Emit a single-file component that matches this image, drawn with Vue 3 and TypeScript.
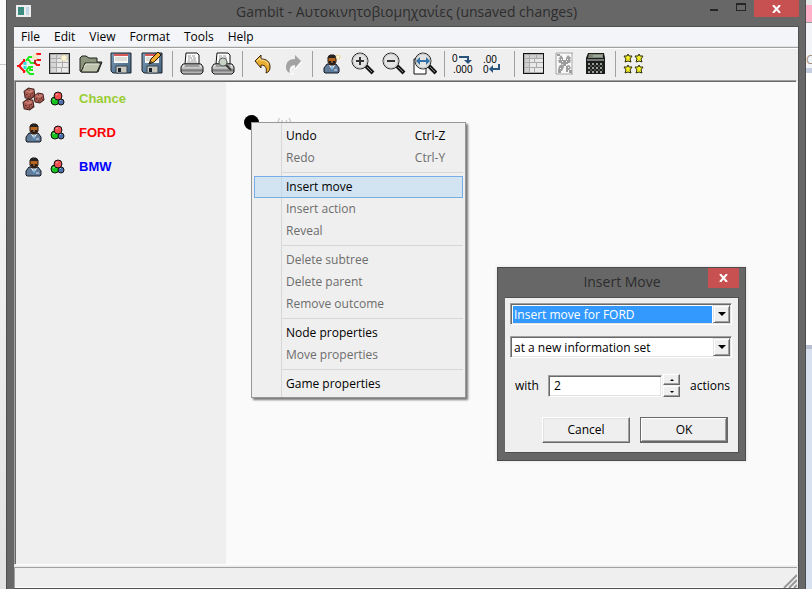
<script setup lang="ts">
import { ref } from 'vue'

interface Tool { id: string; label: string; disabled?: boolean }
interface MenuItem { label: string; shortcut?: string; disabled?: boolean; active?: boolean }
interface Player { name: string; icon: string; tone: string }

const menus: string[] = ['File', 'Edit', 'View', 'Format', 'Tools', 'Help']

const toolGroups: Tool[][] = [
  [
    { id: 'tree', label: 'New extensive game' },
    { id: 'table', label: 'New strategic game' },
    { id: 'open', label: 'Open' },
    { id: 'save', label: 'Save' },
    { id: 'saveas', label: 'Save as' },
  ],
  [
    { id: 'print', label: 'Print' },
    { id: 'preview', label: 'Print preview' },
  ],
  [
    { id: 'undo', label: 'Undo' },
    { id: 'redo', label: 'Redo', disabled: true },
  ],
  [
    { id: 'newplayer', label: 'Add player' },
    { id: 'zoomin', label: 'Zoom in' },
    { id: 'zoomout', label: 'Zoom out' },
    { id: 'zoomfit', label: 'Fit to window' },
  ],
  [
    { id: 'moredec', label: 'More decimals' },
    { id: 'lessdec', label: 'Fewer decimals' },
  ],
  [
    { id: 'strategic', label: 'Strategic view' },
    { id: 'profiles', label: 'Profiles', disabled: true },
    { id: 'calc', label: 'Compute equilibria' },
  ],
  [{ id: 'stars', label: 'Equilibria' }],
]

const players: Player[] = [
  { name: 'Chance', icon: 'dice', tone: 'chance' },
  { name: 'FORD', icon: 'person', tone: 'first' },
  { name: 'BMW', icon: 'person', tone: 'second' },
]

const contextGroups: MenuItem[][] = [
  [
    { label: 'Undo', shortcut: 'Ctrl-Z' },
    { label: 'Redo', shortcut: 'Ctrl-Y', disabled: true },
  ],
  [
    { label: 'Insert move', active: true },
    { label: 'Insert action', disabled: true },
    { label: 'Reveal', disabled: true },
  ],
  [
    { label: 'Delete subtree', disabled: true },
    { label: 'Delete parent', disabled: true },
    { label: 'Remove outcome', disabled: true },
  ],
  [
    { label: 'Node properties' },
    { label: 'Move properties', disabled: true },
  ],
  [{ label: 'Game properties' }],
]

const mover = ref('Insert move for FORD')
const infoset = ref('at a new information set')
const actions = ref('2')

function step(by: number): void {
  actions.value = String(Math.max(1, Number(actions.value) + by))
}
</script>

<template>
  <div class="desktop">
    <svg class="sprites" aria-hidden="true">
      <defs>
        <linearGradient id="metal" x1="0" y1="0" x2="0" y2="1">
          <stop offset="0" stop-color="#fafafa" /><stop offset="0.5" stop-color="#b5b5b5" />
          <stop offset="0.6" stop-color="#6e6e6e" /><stop offset="1" stop-color="#e0e0e0" />
        </linearGradient>
        <linearGradient id="disk" x1="0" y1="0" x2="1" y2="1">
          <stop offset="0" stop-color="#7d9db8" /><stop offset="1" stop-color="#41607c" />
        </linearGradient>
        <symbol id="i-tree" viewBox="0 0 24 24">
          <g fill="none" stroke-width="2">
            <path d="M8 8l-6 6 6 6" stroke="#f11" />
            <path d="M0 14h4M7 7v3M7 18v3" stroke="#f11" stroke-width="2" />
            <path d="M8 10v8" stroke="#2de0e0" stroke-width="3" stroke-dasharray="3 1" />
            <path d="M9 9l3-4h4M11 7l3 4h3M9 19l3-4h4M10 19l3 3h4M13 15v3h3" stroke="#1fe81f" />
            <path d="M18 6l2-4h4M18 7l3 1h3M17 10l3 3h3" stroke="#f11" />
            <path d="M18 5v7" stroke="#a22" />
          </g>
          <circle cx="18" cy="5" r="3" fill="#f7e8c8" />
        </symbol>
        <symbol id="i-table" viewBox="0 0 24 24">
          <path d="M1 1h21v21H1z" fill="#222" /><path d="M2 2h19v19H2z" fill="#aaa" />
          <path d="M3 3h5v3H3zM9 3h5v3H9zM15 3h5v3h-5zM3 7h5v3H3zM3 11h5v4H3zM3 16h5v4H3z" fill="#d6d6d6" />
          <path d="M9 7h5v3H9zM15 7h5v3h-5zM9 11h5v4H9zM15 11h5v4h-5zM9 16h4v4H9zM14 16h6v4h-6z" fill="#eaeaea" />
          <circle cx="16" cy="6" r="3" fill="#fff5d5" stroke="#dccb9f" stroke-dasharray="2 1" />
        </symbol>
        <symbol id="i-strategic" viewBox="0 0 24 24">
          <path d="M1 1h21v21H1z" fill="#111" /><path d="M2 2h19v19H2z" fill="#aaa" />
          <path d="M3 3h4v3H3zM8 3h6v3H8zM15 3h6v3h-6zM3 7h4v3H3zM3 11h4v4H3zM3 16h4v4H3z" fill="#cfcfcf" />
          <path d="M8 7h4v3H8zM13 7h8v3h-8zM8 11h6v4H8zM15 11h6v4h-6zM8 16h4v4H8zM13 16h8v4h-8z" fill="#e8e8e8" />
        </symbol>
        <symbol id="i-open" viewBox="0 0 24 24">
          <path d="M1 19V6l2-2h4l3 2h8v4h5l-4 10H3z" fill="#8c947c" stroke="#1f221b" />
          <path d="M2 20l4-9h16l-4 9z" fill="#bdc3ad" stroke="#1f221b" />
          <path d="M5 15l2-3h13" fill="none" stroke="#e3e7d9" />
        </symbol>
        <symbol id="i-save" viewBox="0 0 24 24">
          <path d="M1 1h20v20H3l-2-2z" fill="url(#disk)" stroke="#1d252c" />
          <path d="M4 2h14v9H4z" fill="#f7f7f4" /><path d="M4 2h14v2H4z" fill="#d65857" />
          <path d="M5 6h12M5 8h12" stroke="#c2c2c2" />
          <path d="M6 14h11v7H6z" fill="#c7c7bd" stroke="#354554" /><path d="M8 16h3v4H8z" fill="#17202a" />
        </symbol>
        <symbol id="i-saveas" viewBox="0 0 24 24">
          <use href="#i-save" width="24" height="24" />
          <path d="M8 12l2-5 7-7 3 3-7 7z" fill="#f2ae31" stroke="#261606" />
          <path d="M8 12l2-3 1 1z" fill="#222" />
        </symbol>
        <symbol id="i-print" viewBox="0 0 24 24">
          <path d="M5 12l1-11h11l2 2v9z" fill="#fff" stroke="#111" />
          <path d="M8 4h3M12 4h3M8 6h4M13 6h3M8 8h2M11 8h5M7 10h10" stroke="#999" />
          <path d="M3 12h18l2 3v5l-2 2H3l-2-2v-5z" fill="url(#metal)" stroke="#111" />
          <path d="M4 15h16l-1-2H5z" fill="#444" /><path d="M4 14h16" stroke="#f5f5f5" />
        </symbol>
        <symbol id="i-preview" viewBox="0 0 24 24">
          <use href="#i-print" width="24" height="24" />
          <circle cx="12" cy="10" r="4" fill="#c8d2c6" stroke="#5e6962" stroke-width="1" />
          <path d="M15 13l5 5" stroke="#3d3b34" stroke-width="2" />
        </symbol>
        <symbol id="i-undo" viewBox="0 0 24 24">
          <path d="M5 9l6-6v4c6 0 9 3 9 8 0 3-1 5-4 6 1-4 0-8-5-8v3z" fill="#e9ad31" stroke="#3b2509" />
          <path d="M7 9l3-3v2c5 0 8 2 8 5" fill="none" stroke="#ffe7a1" />
        </symbol>
        <symbol id="i-redo" viewBox="0 0 24 24">
          <path d="M21 10l-6 7v-3c-5 0-6 4-5 8h3" fill="none" stroke="#fff" />
          <path d="M20 9l-6-6v4c-6 0-9 3-9 8 0 3 1 5 4 6-1-4 0-8 5-8v3z" fill="#a3a3a3" />
        </symbol>
        <symbol id="i-person" viewBox="0 0 24 24">
          <path d="M4 20v-4l3-4h9l3 4v4l-1 1H5z" fill="#617b98" stroke="#111923" />
          <path d="M9 13l3 5 3-5z" fill="#edf4fa" /><path d="M12 14v5" stroke="#3d8bc7" />
          <path d="M14 18h3" stroke="#dce6ef" />
          <path d="M8 5l2-2h4l2 2v5l-2 3h-4l-2-3z" fill="#b5651d" stroke="#24150f" />
          <path d="M8 6V4l2-1h4l2 1v2z" fill="#252321" />
          <path d="M9 9h6v2l-2 2h-2l-2-2z" fill="#261c18" /><path d="M11 10h2" stroke="#d99156" />
        </symbol>
        <symbol id="i-newplayer" viewBox="0 0 24 24">
          <use href="#i-person" width="24" height="24" />
          <circle cx="18" cy="5" r="2" fill="#fffce9" stroke="#e7c26b" stroke-dasharray="2 1" />
        </symbol>
        <symbol id="i-lens" viewBox="0 0 24 24">
          <path d="M15 14l7 7" stroke="#161616" stroke-width="4" /><path d="M16 15l5 5" stroke="#8a8a8a" />
          <circle cx="9" cy="9" r="8" fill="#e4e4e4" stroke="#222" />
          <circle cx="9" cy="9" r="7" fill="none" stroke="#bfc2c2" />
        </symbol>
        <symbol id="i-zoomin" viewBox="0 0 24 24">
          <use href="#i-lens" width="24" height="24" /><path d="M5 9h8M9 5v8" stroke="#333" stroke-width="2" />
        </symbol>
        <symbol id="i-zoomout" viewBox="0 0 24 24">
          <use href="#i-lens" width="24" height="24" /><path d="M5 9h8" stroke="#333" stroke-width="2" />
        </symbol>
        <symbol id="i-zoomfit" viewBox="0 0 24 24">
          <path d="M1 7h12v15H1z" fill="#fff" stroke="#111" /><use href="#i-lens" x="1" width="24" height="24" />
          <path d="M5 9h10" stroke="#3272a6" stroke-width="2" /><path d="M7 5L3 9l4 4zM13 5l4 4-4 4z" fill="#3272a6" />
        </symbol>
        <symbol id="i-moredec" viewBox="0 0 24 24">
          <text x="0" y="10" font-family="Liberation Sans, sans-serif" font-size="10">0</text>
          <text x="1" y="21" font-family="Liberation Sans, sans-serif" font-size="10">.000</text>
          <path d="M7 5h9v4" fill="none" stroke="#28547c" stroke-width="2" /><path d="M12 8h8l-4 4z" fill="#28547c" />
        </symbol>
        <symbol id="i-lessdec" viewBox="0 0 24 24">
          <text x="0" y="11" font-family="Liberation Sans, sans-serif" font-size="10">.00</text>
          <text x="0" y="21" font-family="Liberation Sans, sans-serif" font-size="10">0</text>
          <path d="M16 12v5H9" fill="none" stroke="#28547c" stroke-width="2" /><path d="M10 13v8l-4-4z" fill="#28547c" />
        </symbol>
        <symbol id="i-profiles" viewBox="0 0 24 24">
          <path d="M4 1h16v21H4z" fill="#f8f8f8" /><path d="M3 1h17M3 1v21M3 22h17M19 1v21" stroke="#a5a5a5" />
          <g fill="#9d9d9d">
            <path d="M4 2h3v2H4zM16 18h3v3h-3zM10 8h3v6h-3zM8 10h7v2H8z" />
            <path d="M6 6l2-3 2 3v3H7zM13 6l2-3 3 3-2 3h-3zM5 8h4v3H6zM14 8h4l-1 3h-3zM6 14l3-2 2 3-2 4-4-1zM13 14l3-1 2 3-2 2h-3zM5 18h3v3H5zM13 18h2v2h-2z" />
          </g>
          <path d="M8 7h1v1H8zM14 7h1v1h-1zM7 16h1v1H7zM15 15h1v1h-1z" fill="#fff" />
        </symbol>
        <symbol id="i-calc" viewBox="0 0 24 24">
          <path d="M4 1h16l1 5v16H2V6z" fill="#1b1d1b" /><path d="M5 2h14v4H4z" fill="#7d8478" />
          <path d="M9 4h9" stroke="#bfc8b9" /><path d="M3 8h17" stroke="#777" stroke-width="2" />
          <path d="M4 12h15M4 16h15M4 20h15" stroke="#9a9e99" stroke-width="2" stroke-dasharray="2 2" />
          <path d="M6 14h13M6 18h13" stroke="#777" stroke-width="1" stroke-dasharray="2 2" />
        </symbol>
        <symbol id="i-star" viewBox="0 0 10 10">
          <path d="M5 1l1 2h3L7 6l1 3-3-1-3 1 1-3-2-3h3z" fill="#f3ef2a" stroke="#31300c" stroke-width="1" />
        </symbol>
        <symbol id="i-stars" viewBox="0 0 24 24">
          <use href="#i-star" x="0" y="1" width="10" height="10" /><use href="#i-star" x="11" y="1" width="10" height="10" />
          <use href="#i-star" x="0" y="12" width="10" height="10" /><use href="#i-star" x="11" y="12" width="10" height="10" />
        </symbol>
        <symbol id="i-die" viewBox="0 0 12 12">
          <path d="M1 4l4-3 5 1 1 6-4 3-5-1z" fill="#a85a50" stroke="#432320" />
          <path d="M2 4l4-2 4 1-3 3z" fill="#c97c72" /><path d="M7 6v4" stroke="#793c36" />
          <path d="M3 7h1M5 9h1M8 6h1M9 8h1M5 3h1" stroke="#421d19" />
        </symbol>
        <symbol id="i-dice" viewBox="0 0 24 24">
          <use href="#i-die" x="1" y="0" width="13" height="13" /><use href="#i-die" x="11" y="5" width="12" height="12" />
          <use href="#i-die" x="0" y="11" width="13" height="13" />
        </symbol>
        <symbol id="i-colors" viewBox="0 0 16 16">
          <circle cx="5" cy="10" r="4" fill="#16c41f" stroke="#111" />
          <circle cx="11" cy="11" r="3" fill="#4e70aa" stroke="#111" />
          <circle cx="8" cy="5" r="4" fill="#f25050" stroke="#111" />
          <path d="M6 4l2-1M3 9l2-1M10 10l1-1" stroke="#fff" opacity=".5" />
        </symbol>
      </defs>
    </svg>

    <div class="behind-left"></div>
    <main class="window">
      <header class="titlebar">
        <span class="app-icon"></span>
        <h1>Gambit - Αυτοκινητοβιομηχανίες (unsaved changes)</h1>
        <div class="win-buttons">
          <button type="button" class="min" aria-label="Minimize"><i></i></button>
          <button type="button" class="max" aria-label="Maximize"><i></i></button>
          <button type="button" class="close" aria-label="Close">
            <svg width="9" height="8" viewBox="0 0 9 8"><path d="M1 0l7 8M8 0L1 8" stroke="#fff" stroke-width="2" /></svg>
          </button>
        </div>
      </header>

      <div class="client">
        <nav class="menubar">
          <button v-for="m in menus" :key="m" type="button">{{ m }}</button>
        </nav>
        <div class="toolbar" role="toolbar">
          <div v-for="(group, g) in toolGroups" :key="g" class="group">
            <button v-for="t in group" :key="t.id" type="button" :aria-label="t.label" :disabled="t.disabled">
              <svg width="24" height="24"><use :href="'#i-' + t.id" /></svg>
            </button>
          </div>
        </div>

        <section class="work">
          <ul class="players">
            <li v-for="p in players" :key="p.name">
              <svg width="24" height="24"><use :href="'#i-' + p.icon" /></svg>
              <svg width="16" height="16"><use href="#i-colors" /></svg>
              <span :class="p.tone">{{ p.name }}</span>
            </li>
          </ul>
          <div class="canvas">
            <span class="node"></span>
            <span class="payoff">(u)</span>

            <div class="context" role="menu">
              <div v-for="(group, g) in contextGroups" :key="g" class="ctx-group">
                <button
                  v-for="item in group"
                  :key="item.label"
                  type="button"
                  role="menuitem"
                  :disabled="item.disabled"
                  :class="{ active: item.active }"
                >
                  <span>{{ item.label }}</span><span v-if="item.shortcut" class="shortcut">{{ item.shortcut }}</span>
                </button>
              </div>
            </div>

            <form class="dialog" role="dialog" aria-labelledby="dialog-title" @submit.prevent>
              <header>
                <h2 id="dialog-title">Insert Move</h2>
                <button type="button" class="close" aria-label="Close">
                  <svg width="9" height="8" viewBox="0 0 9 8"><path d="M1 0l7 8M8 0L1 8" stroke="#fff" stroke-width="2" /></svg>
                </button>
              </header>
              <div class="dialog-body">
                <div class="combo focused">
                  <select v-model="mover" aria-label="Player">
                    <option>Insert move for FORD</option>
                    <option>Insert move for BMW</option>
                  </select>
                  <span class="drop"><i></i></span>
                </div>
                <div class="combo">
                  <select v-model="infoset" aria-label="Information set">
                    <option>at a new information set</option>
                  </select>
                  <span class="drop"><i></i></span>
                </div>
                <div class="count">
                  <label for="actions">with</label>
                  <input id="actions" v-model="actions" type="text" />
                  <div class="spin">
                    <button type="button" aria-label="More" @click="step(1)"><i class="up"></i></button>
                    <button type="button" aria-label="Fewer" @click="step(-1)"><i class="down"></i></button>
                  </div>
                  <label for="actions" class="unit">actions</label>
                </div>
                <div class="buttons">
                  <button type="button">Cancel</button>
                  <button type="submit" class="default">OK</button>
                </div>
              </div>
            </form>
          </div>
        </section>

        <footer class="status">
          <svg width="14" height="14" viewBox="0 0 14 14">
            <path d="M1 14L14 1M6 14l8-8M11 14l3-3" stroke="#989898" stroke-width="2" />
          </svg>
        </footer>
      </div>
    </main>
    <div class="behind-right"><span class="tab"></span><span class="word">Co</span><span class="strip"></span><span class="page"></span></div>
  </div>
</template>

<style>
body {
  background: #fff;
}
</style>

<style scoped>
* {
  box-sizing: border-box;
}
.desktop {
  display: grid;
  grid-template-columns: 6px minmax(0, 1fr) 6px;
  height: 100vh;
  padding-bottom: 15px;
  overflow: hidden;
  color: #000;
  font: 12px/16px "Open Sans", "Noto Sans", sans-serif;
}
.sprites {
  position: absolute;
  width: 0;
  height: 0;
}
button {
  margin: 0;
  padding: 0;
  border: 0;
  background: none;
  color: inherit;
  font: inherit;
}
h1,
h2 {
  margin: 0;
  color: #2d2d2d;
  font: 14px/20px "Open Sans", "Noto Sans", sans-serif;
  white-space: nowrap;
}
.behind-left {
  background: linear-gradient(#fafafa 64px, #c8c8c8 64px, #c8c8c8 65px, #f8f8f8 65px, #e2e2e2);
}
.behind-right {
  display: flex;
  flex-direction: column;
  overflow: hidden;
  background: #fff;
}
.tab {
  height: 22px;
  border-top: 5px solid #e6e6e6;
  background: #ffb0c8;
}
.word {
  height: 46px;
  padding-top: 29px;
  border-top: 1px solid #999;
  background: #f3f4f8;
  color: #a59080;
}
.strip {
  height: 5px;
  background: #c5cfdf;
}
.page {
  flex: 1;
  background: linear-gradient(#fff 272px, #b8bfd0 272px, #b8bfd0 276px, #d8e1ef 276px);
}
.window {
  display: flex;
  flex-direction: column;
  min-width: 0;
  padding: 0 6px 0 7px;
  border: solid #4e4e4e;
  border-width: 0 1px;
  background: #676767;
}
.titlebar {
  display: grid;
  grid-template-columns: 100px 1fr 100px;
  height: 26px;
}
.titlebar h1 {
  padding-top: 2px;
  text-align: center;
}
.app-icon {
  width: 15px;
  height: 12px;
  margin: 5px 0 0 2px;
  border: 2px solid #eee;
  background: linear-gradient(90deg, #3c8c82 6px, #eee 6px, #eee 8px, #c5d8e8 8px);
}
.win-buttons {
  display: flex;
  justify-content: flex-end;
  align-items: flex-start;
}
.win-buttons button {
  display: flex;
  justify-content: center;
  height: 17px;
}
.min,
.max {
  width: 27px;
}
.min i {
  width: 8px;
  height: 2px;
  margin-top: 9px;
  background: #262626;
}
.max i {
  width: 10px;
  height: 8px;
  margin-top: 3px;
  border: 1px solid #262626;
  border-top-width: 2px;
}
.close {
  display: flex;
  align-items: center;
  justify-content: center;
  background: #c75050;
}
.win-buttons .close {
  width: 45px;
}
.client {
  display: flex;
  flex: 1;
  flex-direction: column;
  min-height: 0;
  border: solid #505050;
  border-width: 1px 1px 1px 0;
  background: #efefef;
}
.menubar {
  display: flex;
  height: 20px;
  border-bottom: 1px solid #e3e3e3;
  background: #f4f5f8;
}
.menubar button {
  padding: 1px 7px 0;
}
.toolbar {
  display: flex;
  height: 33px;
  border-top: 1px solid #a0a0a0;
  box-shadow: inset 0 1px #fff;
}
.group {
  display: flex;
  align-items: center;
}
.group + .group::before {
  width: 1px;
  height: 26px;
  margin: 0 4px 0 3px;
  background: #a0a0a0;
  content: "";
}
.group button {
  display: flex;
  width: 31px;
  padding-left: 3px;
}
.work {
  display: flex;
  flex: 1;
  min-height: 0;
  margin-right: 1px;
  border: 1px solid #a0a0a0;
  border-right-color: #fff;
  border-bottom-color: #fff;
  box-shadow: inset 1px 1px #696969;
}
.players {
  width: 211px;
  margin: 0;
  padding: 1px 0 0 7px;
  list-style: none;
}
.players li {
  display: flex;
  align-items: center;
  gap: 4px;
  height: 34px;
}
.players span {
  margin-left: 9px;
  font: bold 13px/16px "Liberation Sans", Arial, sans-serif;
}
.players .chance {
  color: #9acd32;
}
.players .first {
  color: #f00;
}
.players .second {
  color: #00f;
}
.canvas {
  position: relative;
  flex: 1;
  margin-top: 1px;
  background: #fafafa;
}
.node {
  position: absolute;
  top: 33px;
  left: 18px;
  width: 15px;
  height: 15px;
  border-radius: 50%;
  background: #000;
}
.payoff {
  position: absolute;
  top: 33px;
  left: 51px;
  color: #bbb;
}
.context {
  position: absolute;
  top: 40px;
  left: 25px;
  width: 215px;
  padding: 2px;
  border: 1px solid #979797;
  background: linear-gradient(90deg, #efefef 29px, #d7d7d7 29px, #d7d7d7 30px, #efefef 30px);
  box-shadow: 2px 2px 2px #777;
}
.ctx-group + .ctx-group::before {
  display: block;
  height: 1px;
  margin: 3px 0 3px 28px;
  background: #d7d7d7;
  content: "";
}
.context button {
  display: flex;
  justify-content: space-between;
  width: 209px;
  height: 22px;
  padding: 3px 17px 3px 32px;
}
.context button:disabled {
  color: #6d6d6d;
}
.context .active {
  padding: 2px 16px 2px 31px;
  border: 1px solid #78aee5;
  background: rgb(181 215 243 / 50%);
}
.shortcut {
  width: 32px;
  white-space: nowrap;
}
.dialog {
  position: absolute;
  top: 185px;
  left: 271px;
  width: 249px;
  padding: 0 6px 7px 7px;
  border: 1px solid #4c4c4c;
  background: #676767;
  box-shadow: 0 0 3px #ddd;
}
.dialog header {
  display: grid;
  grid-template-columns: 1fr;
  height: 29px;
}
.dialog h2 {
  grid-area: 1 / 1;
  padding-top: 4px;
  text-align: center;
}
.dialog header .close {
  grid-area: 1 / 1;
  justify-self: end;
  width: 31px;
  height: 20px;
}
.dialog-body {
  display: flex;
  flex-direction: column;
  gap: 11px;
  padding: 5px 6px 9px 5px;
  border: 1px solid #505050;
  border-left: 0;
  background: #efefef;
}
.combo {
  display: flex;
  height: 22px;
  border: 1px solid;
  border-color: #a0a0a0 #fff #fff #a0a0a0;
  background: #fff;
  box-shadow: inset 1px 1px #696969, inset -1px -1px #e3e3e3;
}
.combo select {
  flex: 1;
  min-width: 0;
  margin: 2px 1px 1px 2px;
  padding: 1px 0 0 1px;
  appearance: none;
  border: 0;
  border-radius: 0;
  background: #fff;
  color: #000;
  font: inherit;
}
.focused select {
  background: #39f;
  color: #fff;
}
.drop {
  display: flex;
  align-items: center;
  justify-content: center;
  width: 17px;
  margin: 1px 1px 1px 0;
  border: 1px solid;
  border-color: #e3e3e3 #696969 #696969 #e3e3e3;
  background: #efefef;
  box-shadow: inset 1px 1px #fff, inset -1px -1px #a0a0a0;
}
.drop i {
  border: 4px solid transparent;
  border-top-color: #000;
  border-bottom: 0;
}
.count {
  display: flex;
  align-items: center;
  height: 23px;
  margin-top: 5px;
  padding-left: 5px;
}
.count label {
  width: 24px;
}
.count input {
  width: 114px;
  height: 22px;
  margin-left: 9px;
  padding: 0 5px;
  border: 1px solid;
  border-color: #a0a0a0 #fff #fff #a0a0a0;
  border-radius: 0;
  background: #fff;
  box-shadow: inset 1px 1px #696969, inset -1px -1px #e3e3e3;
  font: inherit;
}
.spin {
  display: grid;
  gap: 1px;
  margin-left: 1px;
}
.spin button {
  display: flex;
  align-items: center;
  justify-content: center;
  width: 17px;
  height: 11px;
  border: 1px solid;
  border-color: #fff #696969 #696969 #fff;
  box-shadow: inset -1px -1px #a0a0a0;
}
.spin i {
  border: 2px solid transparent;
}
.spin .up {
  border-top: 0;
  border-bottom-color: #000;
}
.spin .down {
  border-bottom: 0;
  border-top-color: #000;
}
.count .unit {
  width: auto;
  margin-left: 10px;
}
.buttons {
  display: flex;
  justify-content: flex-end;
  gap: 10px;
  margin-top: 9px;
  padding-right: 4px;
}
.buttons button {
  width: 88px;
  height: 26px;
  border: 1px solid;
  border-color: #fff #696969 #696969 #fff;
  box-shadow: inset -1px -1px #a0a0a0, inset 1px 1px #e3e3e3;
}
.buttons .default {
  border-color: #696969;
  box-shadow: inset -1px -1px #696969, inset 1px 1px #fff, inset -2px -2px #a0a0a0;
}
.status {
  display: flex;
  align-items: flex-end;
  justify-content: flex-end;
  height: 21px;
  margin: 2px 1px 0 0;
  border: solid #a0a0a0;
  border-width: 1px 0 0 1px;
  box-shadow: inset 0 -1px #fff;
}
</style>
